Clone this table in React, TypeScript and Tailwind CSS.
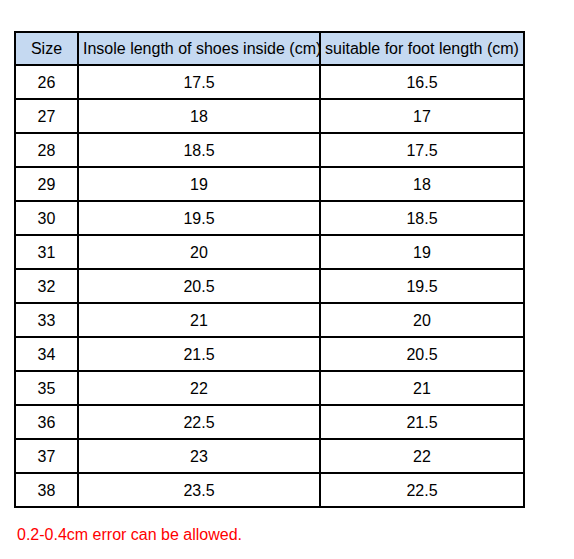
import React from "react";

const rows: [string, string, string][] = [
  ["26", "17.5", "16.5"],
  ["27", "18", "17"],
  ["28", "18.5", "17.5"],
  ["29", "19", "18"],
  ["30", "19.5", "18.5"],
  ["31", "20", "19"],
  ["32", "20.5", "19.5"],
  ["33", "21", "20"],
  ["34", "21.5", "20.5"],
  ["35", "22", "21"],
  ["36", "22.5", "21.5"],
  ["37", "23", "22"],
  ["38", "23.5", "22.5"],
];

const cell =
  "flex items-center overflow-hidden whitespace-nowrap border-r-2 border-b-2 border-black";

export default function App() {
  return (
    <div
      className="w-[574px] h-[559px] bg-white pt-[31px] pl-[14px] text-[16px] leading-[18px] text-black"
      style={{ fontFamily: '"Liberation Sans", Arial, sans-serif' }}
    >
      <div className="grid w-[511px] grid-cols-[63px_242px_204px] border-l-2 border-t-2 border-black">
        <div className={`${cell} justify-center h-[33px] bg-[#c5d9f1]`}>Size</div>
        <div className={`${cell} justify-start pl-[4px] h-[33px] bg-[#c5d9f1]`}>
          Insole length of shoes inside (cm)
        </div>
        <div className={`${cell} justify-center h-[33px] bg-[#c5d9f1]`}>suitable for foot length (cm)</div>
        {rows.map((r) => (
          <React.Fragment key={r[0]}>
            <div className={`${cell} justify-center pt-[2px] h-[34px]`}>{r[0]}</div>
            <div className={`${cell} justify-center pt-[2px] h-[34px]`}>{r[1]}</div>
            <div className={`${cell} justify-center pt-[2px] h-[34px]`}>{r[2]}</div>
          </React.Fragment>
        ))}
      </div>
      <div className="mt-[18px] pl-[3px] text-[#ff0000]">0.2-0.4cm error can be allowed.</div>
    </div>
  );
}
